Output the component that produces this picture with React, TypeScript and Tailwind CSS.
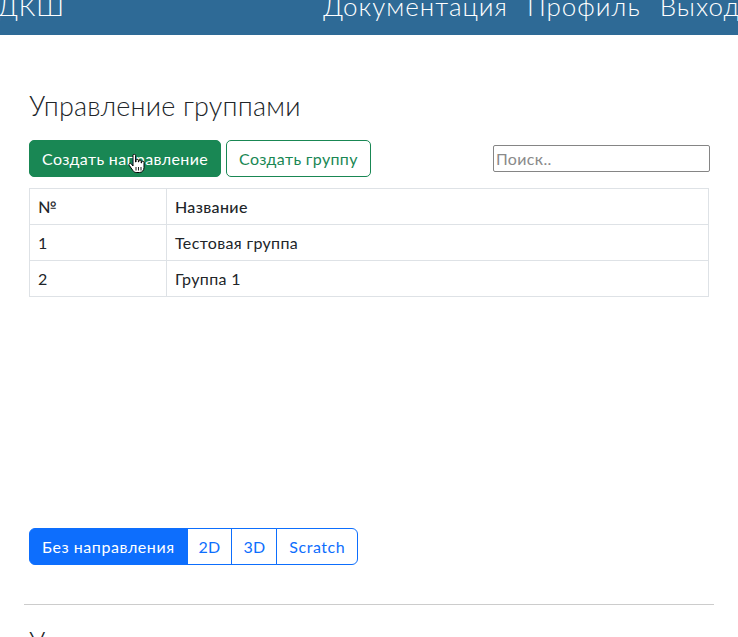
import React from "react";

const groups = [
  { id: 1, name: "Тестовая группа" },
  { id: 2, name: "Группа 1" },
];

const directions = ["Без направления", "2D", "3D", "Scratch"];

function HandCursor() {
  return (
    <svg
      className="pointer-events-none absolute left-[99px] top-[14px]"
      width="18"
      height="20"
      viewBox="0 0 18 20"
    >
      <path
        d="M5 1.5c0-.8.6-1.3 1.3-1.3s1.3.5 1.3 1.3V8h.4V6.5c0-.7.6-1.2 1.2-1.2s1.2.5 1.2 1.2V8h.4V7.2c0-.7.6-1.2 1.2-1.2s1.2.5 1.2 1.2V9h.4V8.3c0-.7.6-1.2 1.2-1.2s1.2.5 1.2 1.2v5.2c0 2.8-1.8 5-4.6 5H8.2c-1.4 0-2.4-.7-3.2-1.8L1.2 11.3c-.5-.7-.3-1.5.4-1.9.6-.3 1.3-.1 1.7.4L5 12V1.5z"
        fill="#fff"
        stroke="#000"
        strokeWidth="1"
      />
      <path d="M8 13v3.5M10.5 13v3.5M13 13v3.5" stroke="#000" strokeWidth="0.9" />
    </svg>
  );
}

export default function App() {
  return (
    <div className="relative h-[637px] w-[738px] overflow-hidden bg-white font-['Lato',sans-serif] tracking-[0.35px] text-[#212529]">
      <header className="flex h-[35px] items-start justify-between overflow-hidden bg-[#2e6a96] text-[26px] font-light leading-none tracking-[1px] text-white">
        <span className="-ml-[2px] -mt-[7px] shrink-0">ДКШ</span>
        <nav className="-mr-[2px] -mt-[7px] flex shrink-0 gap-[19px]">
          <span>Документация</span>
          <span>Профиль</span>
          <span>Выход</span>
        </nav>
      </header>

      <main className="px-[29px]">
        <h3 className="mt-[54px] text-[27px] font-light leading-[34px] tracking-[0.2px]">
          Управление группами
        </h3>

        <div className="mt-[17px] flex items-center">
          <div className="relative">
            <button className="h-[37px] rounded-[5px] border border-[#198754] bg-[#198754] px-[12px] text-[16px] text-white">
              Создать направление
            </button>
            <HandCursor />
          </div>
          <button className="ml-[5px] h-[37px] rounded-[5px] border border-[#198754] bg-white px-[12px] text-[16px] text-[#198754]">
            Создать группу
          </button>
          <input
            className="ml-auto mr-[-1px] h-[27px] w-[217px] rounded-[2px] border border-[#858585] px-[2px] text-[16px] placeholder:text-[#8a8a8a]"
            placeholder="Поиск.."
          />
        </div>

        <table className="mt-[11px] w-full border-collapse border border-[#dee2e6] text-[16px]">
          <thead>
            <tr className="h-[36px]">
              <th className="w-[137px] border border-[#dee2e6] px-[8px] text-left font-medium">
                №
              </th>
              <th className="border border-[#dee2e6] px-[8px] text-left font-medium">
                Название
              </th>
            </tr>
          </thead>
          <tbody>
            {groups.map((group) => (
              <tr key={group.id} className="h-[36px]">
                <td className="border border-[#dee2e6] px-[8px]">{group.id}</td>
                <td className="border border-[#dee2e6] px-[8px]">{group.name}</td>
              </tr>
            ))}
          </tbody>
        </table>

        <div className="mt-[231px] flex">
          {directions.map((item, index) => (
            <button
              key={item}
              className={
                index === 0
                  ? "h-[37px] rounded-l-[6px] border border-[#0d6efd] bg-[#0d6efd] px-[12px] text-[16px] tracking-[0.55px] text-white"
                  : index === directions.length - 1
                  ? "-ml-px h-[37px] rounded-r-[6px] border border-[#0d6efd] bg-white px-[12px] text-[16px] tracking-[0.55px] text-[#0d6efd]"
                  : "-ml-px h-[37px] border border-[#0d6efd] bg-white px-[11px] text-[16px] tracking-[0.2px] text-[#0d6efd]"
              }
            >
              {item}
            </button>
          ))}
        </div>
      </main>

      <hr className="mx-[24px] mt-[39px] border-t border-[#cccccc]" />

      <h3 className="mt-[20px] px-[29px] text-[27px] font-light leading-[34px] tracking-[0.2px]">
        Управление пользователями
      </h3>
    </div>
  );
}
